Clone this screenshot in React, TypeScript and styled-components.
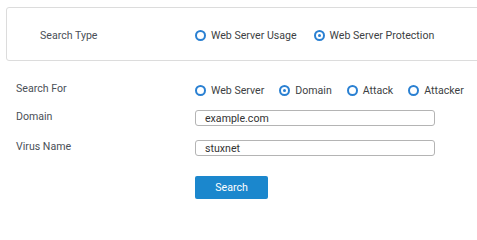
import React, { FC, useState } from 'react';
import styled, { createGlobalStyle } from 'styled-components';

const GlobalStyle = createGlobalStyle`
    html, body {
        margin: 0;
        padding: 0;
        background: #fff;
        overflow: hidden;
    }
    body {
        font-family: Roboto, "Liberation Sans", Arial, sans-serif;
        font-size: 10.6px;
        color: #444;
    }
`;

type RadioOption = { value: string; label: string };

const RadioGroup: FC<{ options: RadioOption[]; value: string; onChange: (v: string) => void; gap: number }> = ({ options, value, onChange, gap }) => (
    <StyledRadioGroup $gap={gap}>
        {options.map((opt) => (
            <RadioLabel key={opt.value} onClick={() => onChange(opt.value)}>
                <RadioCircle $checked={opt.value === value} />
                <span>{opt.label}</span>
            </RadioLabel>
        ))}
    </StyledRadioGroup>
);

const App: FC = () => {
    const [searchType, setSearchType] = useState<string>('protection');
    const [searchFor, setSearchFor] = useState<string>('domain');
    const [domain, setDomain] = useState<string>('example.com');
    const [virus, setVirus] = useState<string>('stuxnet');

    return (
        <>
            <GlobalStyle />
            <StyledTypeBox>
                <BoxLabel>Search Type</BoxLabel>
                <RadioGroup
                    gap={17}
                    value={searchType}
                    onChange={setSearchType}
                    options={[
                        { value: 'usage', label: 'Web Server Usage' },
                        { value: 'protection', label: 'Web Server Protection' },
                    ]}
                />
            </StyledTypeBox>
            <StyledForm>
                <FormRow $height={20}>
                    <FieldLabel>Search For</FieldLabel>
                    <RadioWrap>
                        <RadioGroup
                            gap={15}
                            value={searchFor}
                            onChange={setSearchFor}
                            options={[
                                { value: 'server', label: 'Web Server' },
                                { value: 'domain', label: 'Domain' },
                                { value: 'attack', label: 'Attack' },
                                { value: 'attacker', label: 'Attacker' },
                            ]}
                        />
                    </RadioWrap>
                </FormRow>
                <FormRow $height={16} $top={8}>
                    <FieldLabel>Domain</FieldLabel>
                    <TextInput value={domain} onChange={(e) => setDomain(e.target.value)} />
                </FormRow>
                <FormRow $height={16} $top={14}>
                    <FieldLabel>Virus Name</FieldLabel>
                    <TextInput value={virus} onChange={(e) => setVirus(e.target.value)} />
                </FormRow>
                <FormRow $height={23} $top={20}>
                    <FieldLabel />
                    <SearchButton>Search</SearchButton>
                </FormRow>
            </StyledForm>
        </>
    );
};

const StyledTypeBox = styled.div`
    box-sizing: border-box;
    margin: 7px -20px 0 6px;
    height: 54px;
    border: 1px solid #dcdcdc;
    border-radius: 3px;
    display: flex;
    align-items: center;
    padding: 2px 0 0 33px;
`;

const BoxLabel = styled.div`
    width: 155px;
    flex-shrink: 0;
    color: #4a4f57;
`;

const StyledForm = styled.div`
    margin-top: 21px;
    padding-left: 16px;
    display: flex;
    flex-direction: column;
`;

const FormRow = styled.div<{ $height: number; $top?: number }>`
    display: flex;
    align-items: flex-start;
    height: ${(p) => p.$height}px;
    margin-top: ${(p) => p.$top ?? 0}px;
`;

const FieldLabel = styled.div`
    width: 179px;
    flex-shrink: 0;
    line-height: 13px;
    color: #4a4f57;
`;

const RadioWrap = styled.div`
    padding-top: 2px;
`;

const StyledRadioGroup = styled.div<{ $gap: number }>`
    display: flex;
    align-items: center;
    gap: ${(p) => p.$gap}px;
`;

const RadioLabel = styled.label`
    display: flex;
    align-items: center;
    gap: 5px;
    cursor: pointer;
    color: #3d3f44;
    line-height: 13px;
`;

const RadioCircle = styled.span<{ $checked: boolean }>`
    box-sizing: border-box;
    width: 11px;
    height: 11px;
    border-radius: 50%;
    border: 2px solid #2a80d2;
    display: flex;
    align-items: center;
    justify-content: center;

    &::after {
        content: '';
        display: ${(p) => (p.$checked ? 'block' : 'none')};
        width: 3px;
        height: 3px;
        border-radius: 50%;
        background: #2a80d2;
    }
`;

const TextInput = styled.input`
    box-sizing: border-box;
    width: 240px;
    height: 16px;
    border: 1px solid #b4b4b4;
    border-radius: 3px;
    padding: 0 9px;
    font-family: Roboto, "Liberation Sans", Arial, sans-serif;
    font-size: 10.6px;
    color: #333;
    outline: none;
`;

const SearchButton = styled.button`
    width: 73px;
    height: 23px;
    border: none;
    border-radius: 2px;
    background: #1b87cd;
    color: #fff;
    font-family: Roboto, "Liberation Sans", Arial, sans-serif;
    font-size: 10.6px;
    cursor: pointer;
`;

export default App;
